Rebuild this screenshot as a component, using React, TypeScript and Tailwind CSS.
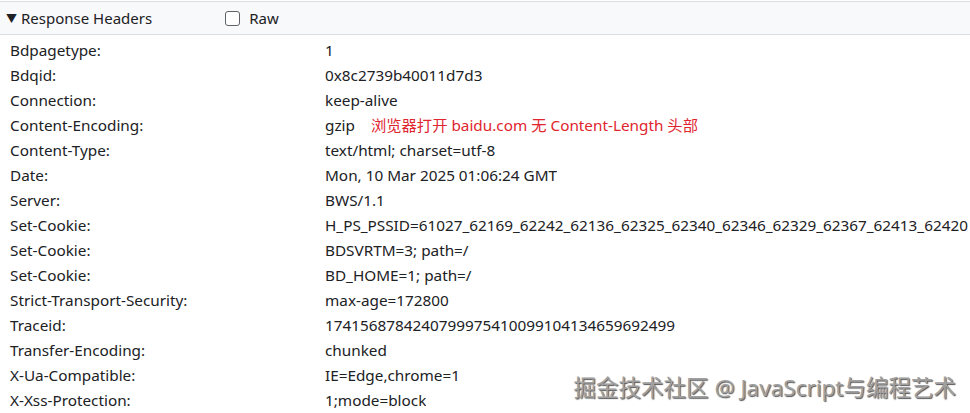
import React from "react";

const rows: [string, React.ReactNode][] = [
  ["Bdpagetype:", "1"],
  ["Bdqid:", "0x8c2739b40011d7d3"],
  ["Connection:", "keep-alive"],
  [
    "Content-Encoding:",
    <>
      gzip
      <span className="ml-[16px] text-[#e0252e]">浏览器打开 baidu.com 无 Content-Length 头部</span>
    </>,
  ],
  ["Content-Type:", "text/html; charset=utf-8"],
  ["Date:", "Mon, 10 Mar 2025 01:06:24 GMT"],
  ["Server:", "BWS/1.1"],
  ["Set-Cookie:", "H_PS_PSSID=61027_62169_62242_62136_62325_62340_62346_62329_62367_62413_62420"],
  ["Set-Cookie:", "BDSVRTM=3; path=/"],
  ["Set-Cookie:", "BD_HOME=1; path=/"],
  ["Strict-Transport-Security:", "max-age=172800"],
  ["Traceid:", "1741568784240799975410099104134659692499"],
  ["Transfer-Encoding:", "chunked"],
  ["X-Ua-Compatible:", "IE=Edge,chrome=1"],
  ["X-Xss-Protection:", "1;mode=block"],
];

export default function App() {
  return (
    <div
      className="relative w-[970px] h-[413px] overflow-hidden bg-white text-[#202124]"
      style={{ fontFamily: '"Noto Sans", "Noto Sans CJK SC", sans-serif' }}
    >
      <div className="mt-px h-[34px] border-y border-[#dcdde3] bg-[#f8f9fb] flex items-center text-[15px]">
        <span className="ml-[6px] text-[11px] leading-none">▼</span>
        <span className="ml-[4px]">Response Headers</span>
        <span className="ml-[73px] w-[15px] h-[15px] rounded-[3px] border border-[#5f6368] bg-white"></span>
        <span className="ml-[9px]">Raw</span>
      </div>
      <div className="pt-[3px]">
        {rows.map(([k, v], i) => (
          <div key={i} className="flex h-[25px] items-center text-[15.3px] whitespace-nowrap">
            <div className="w-[325px] shrink-0 pl-[10px]">{k}</div>
            <div className="overflow-hidden">{v}</div>
          </div>
        ))}
      </div>
      <div
        className="absolute right-[14px] bottom-[14px] text-[22.5px] text-[#a0a0a0] whitespace-nowrap leading-none"
        style={{ textShadow: "1px 1px 1px #555, -1px -1px 0 #fff" }}
      >
        掘金技术社区 @ JavaScript与编程艺术
      </div>
    </div>
  );
}
